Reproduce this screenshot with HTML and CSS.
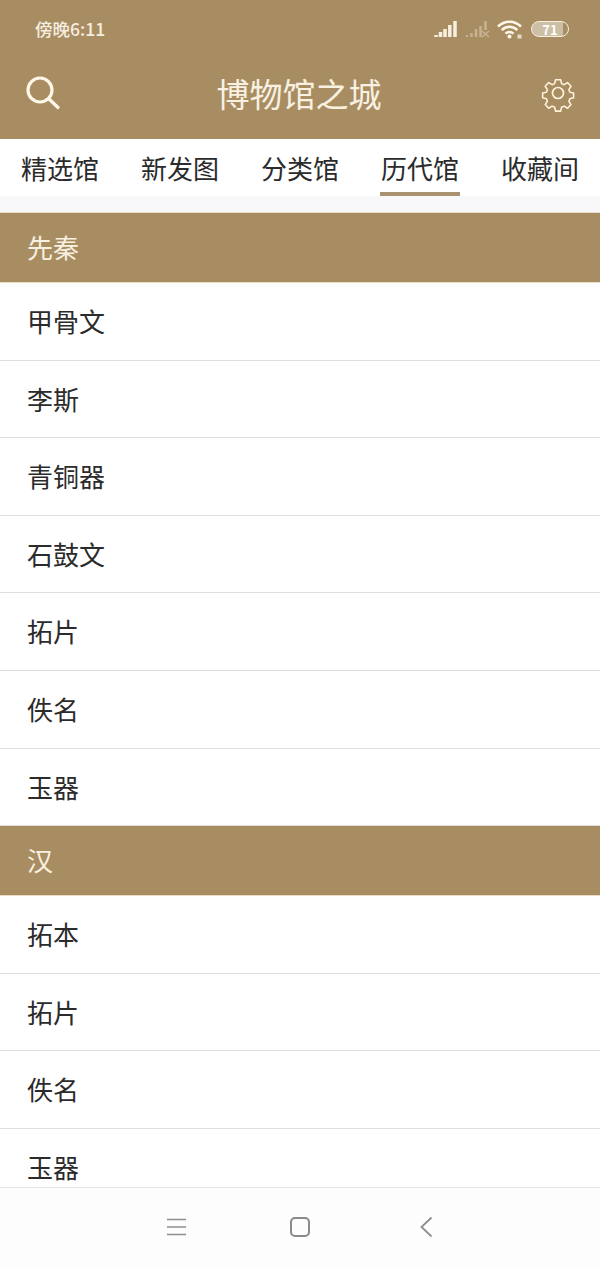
FILE: index.html
```html
<!DOCTYPE html>
<html lang="zh-CN">
<head>
  <meta charset="UTF-8" />
  <meta name="viewport" content="width=device-width, initial-scale=1.0" />
  <title>博物馆之城</title>
  <link rel="stylesheet" href="styles.css">
</head>
<body>

  <div class="app">
    <header class="top">
      <div class="status">
        <span class="time">傍晚6:11</span>
        <div class="status-icons">
          <svg width="24" height="18" viewBox="0 0 24 18">
            <path d="M2 17v-2M6.500 17v-5M11 17V9M15.800 17V5M21 17V1" stroke="#f7efdf" stroke-width="3.500" fill="none"/>
          </svg>
          <svg class="dim" width="25" height="18" viewBox="0 0 25 18">
            <path d="M2 17v-2M6.500 17v-4M11 17V9M15.500 17V6M20.500 10V1" stroke="#f7efdf" stroke-width="2.400" fill="none"/>
            <path d="M17 11l7 6M24 11l-7 6" stroke="#f7efdf" stroke-width="1.500" fill="none"/>
          </svg>
          <svg width="26" height="20" viewBox="0 0 26 20">
            <path d="M1 7.500C7.500 1 17.500 1 24 7.500M4.800 11.200c4.500-4.500 11-4.500 15.500 0M8.500 14.700c2.400-2.400 5.700-2.400 8 0" stroke="#fff8ea" stroke-width="2.500" fill="none"/>
            <circle cx="12.500" cy="17.500" r="2" fill="#fff8ea"/>
            <path d="M20.500 15.500h4v4h-4z" fill="#f7efdf" opacity="0.800"/>
          </svg>
          <div class="battery"><span class="battery-num">71</span></div>
        </div>
      </div>
      <div class="title-bar">
        <svg width="36" height="36" viewBox="0 0 36 36">
          <circle cx="15" cy="15" r="12" stroke="#fff8ea" stroke-width="3.200" fill="none"/>
          <path d="M24 24l9 8.500" stroke="#fff8ea" stroke-width="3.200" stroke-linecap="round" fill="none"/>
        </svg>
        <h1 class="title">博物馆之城</h1>
        <svg width="38" height="38" viewBox="-4 -2 38 38">
          <path d="M14 2h6l1 4.500 3 1.300 4-2.500 4 4.300-2.500 4 1.200 2.900 4.300 1v5.500l-4.300 1-1.200 3 2.500 3.900-4 4.300-4-2.500-3 1.300-1 4.500h-6l-1-4.500-3-1.300-4 2.500-4-4.300 2.500-3.900-1.200-3-4.300-1v-5.500l4.300-1 1.200-2.900-2.500-4 4-4.300 4 2.500 3-1.300z" transform="translate(2.500 2) scale(0.860 0.860)" stroke="#fff3dc" stroke-width="1.800" stroke-linejoin="round" fill="none"/>
          <circle cx="17" cy="17" r="5.500" stroke="#fff3dc" stroke-width="1.700" fill="none"/>
        </svg>
      </div>
    </header>

    <nav class="tabs">
      <a class="tab">精选馆</a>
      <a class="tab">新发图</a>
      <a class="tab">分类馆</a>
      <a class="tab active">历代馆</a>
      <a class="tab">收藏间</a>
    </nav>

    <div class="list">
      <div class="section">先秦</div>
      <div class="row">甲骨文</div>
      <div class="row">李斯</div>
      <div class="row">青铜器</div>
      <div class="row">石鼓文</div>
      <div class="row">拓片</div>
      <div class="row">佚名</div>
      <div class="row">玉器</div>
      <div class="section">汉</div>
      <div class="row">拓本</div>
      <div class="row">拓片</div>
      <div class="row">佚名</div>
      <div class="row">玉器</div>
    </div>

    <footer class="nav-bar">
      <svg width="22" height="20" viewBox="0 0 22 20">
        <path d="M1 2.500h19M1 10h19M1 17.500h19" stroke="#8e8e8e" stroke-width="1.700" fill="none"/>
      </svg>
      <svg width="22" height="22" viewBox="0 0 22 22">
        <rect x="2" y="2" width="18" height="18" rx="4" stroke="#8a8a8a" stroke-width="2" fill="none"/>
      </svg>
      <svg width="22" height="22" viewBox="0 0 22 22">
        <path d="M19.500 1.500L9.500 11l10 9.500" stroke="#8e8e8e" stroke-width="1.800" fill="none"/>
      </svg>
    </footer>
  </div>

</body>
</html>
```

FILE: styles.css
```css
body {
  margin: 0;
  font-family: "Noto Sans CJK SC", "Noto Sans", sans-serif;
  background: #fff;
}

.app {
  display: flex;
  flex-direction: column;
  height: 1267px;
  overflow: hidden;
}

.top {
  background: #a98d62;
  height: 139px;
  flex: none;
}

.status {
  display: flex;
  justify-content: space-between;
  align-items: center;
  height: 58px;
  padding: 0 31px 0 35px;
}

.time {
  margin-bottom: 2px;
  font-size: 17.500px;
  font-weight: 500;
  color: #f5eee0;
}

.status-icons {
  display: flex;
  align-items: center;
  gap: 7px;
}

.dim {
  opacity: 0.4;
}

.battery {
  box-sizing: border-box;
  width: 38px;
  height: 16px;
  margin-left: 1px;
  border: 1.500px solid #f7efdf;
  border-radius: 8px;
  display: flex;
  align-items: center;
  justify-content: center;
  background: linear-gradient(to right, #cdbfa6 85%, transparent 85%);
}

.battery-num {
  font-size: 13px;
  line-height: 13px;
  font-weight: 700;
  color: #fff;
}

.title-bar {
  display: flex;
  justify-content: space-between;
  align-items: center;
  height: 70px;
  padding: 0 25px;
}

.title {
  margin: 0;
  font-size: 33px;
  font-weight: 400;
  color: #f8f1e2;
}

.tabs {
  display: flex;
  justify-content: space-between;
  flex: none;
  height: 57px;
  padding: 0 21px;
  background: #fff;
}

.tab {
  box-sizing: border-box;
  height: 57px;
  padding-top: 10px;
  font-size: 26px;
  line-height: 38px;
  color: #2b2b2b;
}

.tab.active {
  margin: 0 -1px;
  padding: 10px 1px 0;
  border-bottom: 4px solid #a99373;
}

.list {
  flex: 1;
  min-height: 0;
  overflow: hidden;
  padding-top: 17px;
  background: linear-gradient(#f8f7f9 16px, #eadfc9 16px, #eadfc9 17px, #fff 17px);
}

.section {
  box-sizing: border-box;
  height: 70px;
  padding-left: 27px;
  font-size: 26px;
  line-height: 68px;
  color: #f8f1e2;
  background: #a98d62;
  border-bottom: 1px solid #e8dcc4;
}

.row {
  box-sizing: border-box;
  height: 77.600px;
  padding-left: 27px;
  font-size: 26px;
  line-height: 76px;
  color: #2b2b2b;
  border-bottom: 1px solid #dedede;
}

.nav-bar {
  flex: none;
  height: 80px;
  box-sizing: border-box;
  display: flex;
  justify-content: center;
  align-items: center;
  gap: 101px;
  padding-bottom: 1px;
  background: #fdfdfd;
  border-top: 1px solid #e6e6e6;
}
```
